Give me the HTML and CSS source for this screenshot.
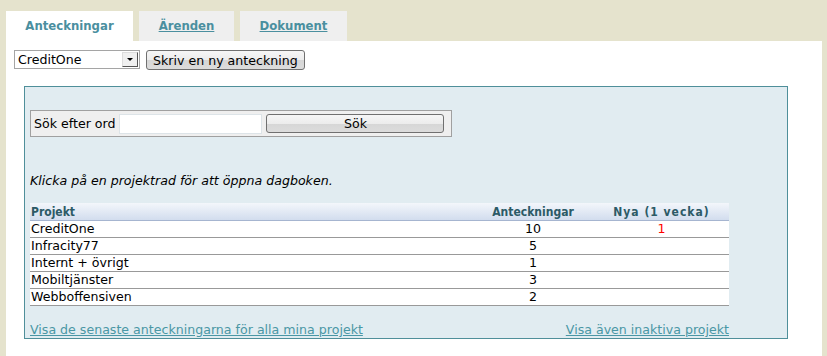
FILE: index.html
```html
<!DOCTYPE html>
<html lang="sv">
<head>
    <meta charset="UTF-8">
    <title>Anteckningar</title>
    <link rel="stylesheet" href="styles.css">
</head>
<body>
    <div class="tabs">
        <div class="tab active">Anteckningar</div>
        <div class="tab"><a href="#">Ärenden</a></div>
        <div class="tab"><a href="#">Dokument</a></div>
    </div>

    <div class="content">
        <div class="toolbar">
            <div class="select">
                <span class="select-value">CreditOne</span>
                <span class="select-arrow"></span>
            </div>
            <button class="btn">Skriv en ny anteckning</button>
        </div>

        <div class="panel">
            <div class="search">
                <label>Sök efter ord</label>
                <input type="text" class="search-input">
                <button class="btn search-btn">Sök</button>
            </div>

            <p class="hint">Klicka på en projektrad för att öppna dagboken.</p>

            <table class="projects">
                <thead>
                    <tr>
                        <th class="col-name">Projekt</th>
                        <th class="col-count">Anteckningar</th>
                        <th class="col-new">Nya (1 vecka)</th>
                    </tr>
                </thead>
                <tbody>
                    <tr><td>CreditOne</td><td class="num">10</td><td class="num new">1</td></tr>
                    <tr><td>Infracity77</td><td class="num">5</td><td></td></tr>
                    <tr><td>Internt + övrigt</td><td class="num">1</td><td></td></tr>
                    <tr><td>Mobiltjänster</td><td class="num">3</td><td></td></tr>
                    <tr><td>Webboffensiven</td><td class="num">2</td><td></td></tr>
                </tbody>
            </table>

            <div class="links">
                <a href="#">Visa de senaste anteckningarna för alla mina projekt</a>
                <a href="#">Visa även inaktiva projekt</a>
            </div>
        </div>
    </div>
</body>
</html>
```

FILE: styles.css
```css
body {
    margin: 0;
    background: #e5e3cd;
    font-family: 'DejaVu Sans', Verdana, sans-serif;
    font-size: 12.6px;
    color: #000;
}

.tabs {
    display: flex;
    gap: 6px;
    padding: 11px 0 0 6px;
}

.tab {
    height: 30px;
    line-height: 30px;
    background: #efefef;
    font-family: 'DejaVu Sans Condensed', 'DejaVu Sans', sans-serif;
    font-weight: bold;
    font-size: 13px;
    color: #4a8f9f;
    text-align: center;
}

.tab:nth-child(1) {
    width: 127px;
}

.tab:nth-child(2) {
    width: 95px;
}

.tab:nth-child(3) {
    width: 107px;
}

.tab.active {
    background: #fff;
}

.tab a {
    color: #4a8f9f;
}

.content {
    background: #fff;
    margin: 0 5px 0 6px;
    padding: 9px 0 20px 8px;
}

.toolbar {
    display: flex;
    gap: 6px;
    align-items: flex-start;
}

.select {
    width: 124px;
    height: 17px;
    border: 1px solid #a5a5a5;
    display: flex;
    align-items: center;
    justify-content: space-between;
}

.select-value {
    padding-left: 3px;
}

.select-arrow {
    width: 14px;
    height: 13px;
    margin-right: 1px;
    border: 1px solid #555;
    border-top-color: #ddd;
    border-left-color: #ddd;
    background: #f0f0f0;
    position: relative;
}

.select-arrow::after {
    content: '';
    position: absolute;
    left: 4px;
    top: 5px;
    border-left: 3px solid transparent;
    border-right: 3px solid transparent;
    border-top: 3px solid #000;
}

.btn {
    font-family: inherit;
    font-size: 12.6px;
    height: 20px;
    padding: 0 6px;
    border: 1px solid #707070;
    border-radius: 3px;
    background: linear-gradient(to bottom, #f6f6f6 0%, #ececec 50%, #d6d6d6 51%, #dcdcdc 100%);
    color: #000;
}

.panel {
    margin: 16px 0 0 10px;
    width: 757px;
    height: 228px;
    border: 1px solid #4f8f9a;
    background: #e1ecf1;
    padding: 23px 0 0 5px;
}

.search {
    width: 417px;
    height: 25px;
    border: 1px solid #a0a0a0;
    background: #efefef;
    display: flex;
    align-items: center;
    padding-left: 3px;
    gap: 4px;
}

.search-input {
    width: 139px;
    height: 16px;
    border: 1px solid #dde4e8;
    margin: 0;
    padding: 1px;
}

.search-btn {
    width: 178px;
    height: 19px;
}

.hint {
    font-style: italic;
    margin: 36px 0 0 0;
    line-height: 16px;
}

.projects {
    margin-top: 14px;
    width: 699px;
    border-collapse: collapse;
    background: #fff;
}

.projects th {
    height: 17px;
    padding: 0 1px;
    background: linear-gradient(to bottom, #f3f6fb, #d2ddee);
    border-bottom: 1px solid #a6b5d0;
    color: #2c5a66;
    font-family: 'DejaVu Sans Condensed', 'DejaVu Sans', sans-serif;
    font-size: 12px;
    font-weight: bold;
    text-align: left;
}

.projects th.col-count,
.projects th.col-new {
    text-align: center;
}

.projects th.col-count {
    width: 120px;
}

.projects th.col-new {
    width: 133px;
    letter-spacing: 1px;
}

.projects td {
    height: 16px;
    padding: 0 1px;
    border-bottom: 1px solid #999;
    line-height: 16px;
}

.projects td.num {
    text-align: center;
}

.projects td.new {
    color: #f00;
}

.links {
    display: flex;
    justify-content: space-between;
    width: 699px;
    margin-top: 16px;
}

.links a {
    color: #4a97a5;
}
```
